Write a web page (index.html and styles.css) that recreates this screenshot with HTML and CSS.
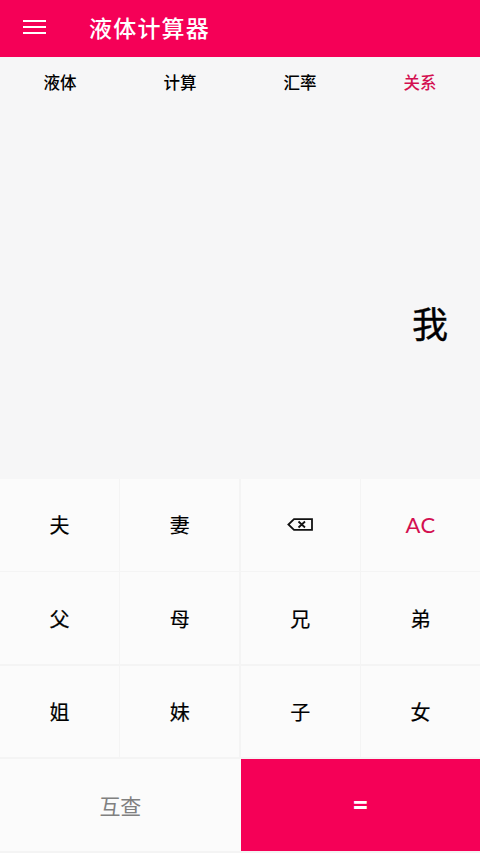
FILE: index.html
```html
<!DOCTYPE html>
<html lang="zh">
<head>
<meta charset="utf-8">
<title>液体计算器</title>
<link rel="stylesheet" href="styles.css">
</head>
<body>
<div class="app">
  <header class="topbar">
    <svg class="menu" width="24" height="16" viewBox="0 0 24 16"><path d="M0 2h23M0 8h23M0 14h23" stroke="#fff" stroke-width="1.800" fill="none"/></svg>
    <h1 class="title">液体计算器</h1>
  </header>
  <nav class="tabs">
    <span class="tab">液体</span>
    <span class="tab">计算</span>
    <span class="tab">汇率</span>
    <span class="tab active">关系</span>
  </nav>
  <section class="display"><span class="result">我</span></section>
  <section class="keys">
    <div class="key">夫</div>
    <div class="key">妻</div>
    <div class="key">
      <svg width="26" height="13" viewBox="0 0 26 13"><path d="M7 1.200H25V11.800H7L1.400 6.500Z" fill="none" stroke="#111" stroke-width="1.800"/><path d="M11.500 3.500L18 9.500M18 3.500L11.500 9.500" stroke="#111" stroke-width="1.800" fill="none"/></svg>
    </div>
    <div class="key ac">AC</div>
    <div class="key">父</div>
    <div class="key">母</div>
    <div class="key">兄</div>
    <div class="key">弟</div>
    <div class="key">姐</div>
    <div class="key">妹</div>
    <div class="key">子</div>
    <div class="key">女</div>
    <div class="key wide lookup">互查</div>
    <div class="key wide equals">=</div>
  </section>
</div>
</body>
</html>
```
FILE: styles.css
```css
* { box-sizing: border-box; }
html, body { margin: 0; height: 100%; }
body { background: #fff; font-family: "Noto Sans CJK SC", "Noto Sans", sans-serif; color: #000; }
.app { width: 480px; height: 853px; display: flex; flex-direction: column; background: #f6f6f7; overflow: hidden; }
.topbar { height: 57px; flex: none; background: #f50057; display: flex; align-items: center; padding-left: 23px; }
.menu { display: block; margin-top: -3px; }
.title { margin: -4px 0 0 42px; font-size: 23px; line-height: 28px; font-weight: 500; color: #fff; letter-spacing: 1.200px; }
.tabs { height: 52px; flex: none; display: grid; grid-template-columns: repeat(4, 1fr); align-items: center; }
.tab { text-align: center; font-size: 16.500px; font-weight: 500; line-height: 52px; margin-top: -2px; }
.tab.active { color: #d30f50; }
.display { flex: none; height: 370px; display: flex; justify-content: flex-end; align-items: flex-end; padding: 0 32px 135px 0; }
.result { font-size: 36px; line-height: 44px; -webkit-text-stroke: 0.400px #000; }
.keys { flex: none; height: 374px; display: grid; grid-template-columns: repeat(4, 1fr); grid-template-rows: repeat(4, 91.800px); gap: 1.500px; background: #f4f4f4; }
.key { display: flex; align-items: center; justify-content: center; background: #fbfbfb; font-size: 20px; -webkit-text-stroke: 0.200px #000; }
.ac { color: #d30f50; font-family: "Lato", sans-serif; font-size: 22px; letter-spacing: 0.500px; -webkit-text-stroke: 0; }
.wide { grid-column: span 2; }
.lookup { color: #808080; font-size: 21px; -webkit-text-stroke: 0; margin-right: -1.500px; }
.equals { background: #f50057; color: #fff; font-weight: 700; font-size: 26px; font-family: "Noto Sans", sans-serif; -webkit-text-stroke: 0; }
```
